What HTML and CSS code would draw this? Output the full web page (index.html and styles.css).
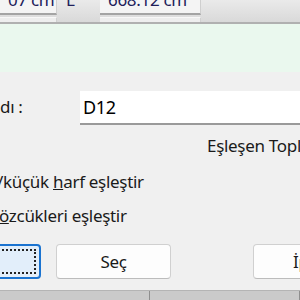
FILE: index.html
```html
<!DOCTYPE html>
<html lang="tr">

<head>
    <meta charset="UTF-8">
    <title>Bul</title>
    <link rel="stylesheet" href="styles.css">
</head>

<body>
    <!-- üst araç çubuğu -->
    <div class="toolbar">
        <div class="tool-row">
            <div class="field field-w"><span class="field-text right">07 cm</span></div>
            <div class="tool-label"><span class="field-text">L</span></div>
            <div class="field field-l"><span class="field-text">668.12 cm</span></div>
        </div>
        <div class="tool-row tool-row2">
            <div class="field2 field-w"></div>
            <div class="tool-gap"></div>
            <div class="field2 field-l"></div>
        </div>
    </div>

    <!-- yeşil bilgi alanı -->
    <div class="info"></div>

    <!-- arama formu -->
    <div class="form">
        <div class="form-row">
            <label class="form-label">dı :</label>
            <div class="textbox">D12</div>
        </div>
        <div class="match">Eşleşen Toplam</div>
        <div class="check">/küçük <u>h</u>arf eşleştir</div>
        <div class="check check2"><u>ö</u>zcükleri eşleştir</div>
        <div class="buttons">
            <button class="btn btn-focus"><span class="focus-rect">Bul</span></button>
            <button class="btn">Seç</button>
            <button class="btn btn-far">İptal</button>
        </div>
    </div>

    <!-- alt durum çubuğu -->
    <div class="status">
        <div class="status-cell"></div>
        <div class="status-cell"></div>
    </div>
</body>

</html>
```

FILE: styles.css
```css
* {
    margin: 0;
    padding: 0;
    box-sizing: border-box;
}

body {
    width: 300px;
    height: 300px;
    overflow: hidden;
    background-color: #f0f0f0;
    font-family: "Noto Sans", "Open Sans", sans-serif;
    font-size: 17px;
    letter-spacing: -0.3px;
    color: #1a1a1a;
}

/* araç çubuğu */
.toolbar {
    height: 24px;
    background: linear-gradient(#eaeaea, #d9d9d9);
    border-bottom: 2px solid #b0b0b0;
}

.tool-row {
    display: flex;
    height: 15px;
}

.field {
    height: 15px;
    overflow: hidden;
    background-color: #f4f4f4;
    border-bottom: 2px solid #a4a4a4;
    border-right: 1px solid #cfcfcf;
}

.field-w {
    width: 57px;
}

.field-l {
    width: 101px;
}

.field-text {
    display: block;
    margin-top: -12px;
    line-height: 24px;
    padding-left: 8px;
    color: #20205a;
    white-space: nowrap;
}

.field-text.right {
    text-align: right;
    padding-right: 4px;
}

.tool-label {
    width: 43px;
    height: 15px;
    overflow: hidden;
}

.tool-label .field-text {
    padding-left: 9px;
}

.tool-row2 {
    height: 7px;
    margin-top: 2px;
}

.field2 {
    height: 5px;
    background-color: #eeeeee;
    border-top: 1px solid #f8f8f8;
    border-right: 1px solid #d0d0d0;
}

.tool-gap {
    width: 43px;
}

/* bilgi alanı */
.info {
    height: 48px;
    background-color: #eaf8ee;
}

/* form */
.form-row {
    display: flex;
    margin-top: 19px;
    height: 34px;
}

.form-label {
    width: 80px;
    flex-shrink: 0;
    line-height: 34px;
    margin-top: -1px;
}

.textbox {
    width: 240px;
    flex-shrink: 0;
    background-color: #ffffff;
    border-bottom: 2px solid #9a9a9a;
    padding-left: 3px;
    line-height: 32px;
    font-size: 18px;
    color: #000000;
}

.match {
    margin-top: 9px;
    padding-left: 207px;
    line-height: 24px;
    white-space: nowrap;
}

.check {
    margin-top: 12px;
    margin-left: -3px;
    line-height: 24px;
    white-space: nowrap;
}

.check2 {
    margin-top: 10px;
    margin-left: -1px;
}

/* düğmeler */
.buttons {
    display: flex;
    gap: 15px;
    margin-top: 16px;
    margin-left: -74px;
}

.btn {
    flex-shrink: 0;
    width: 115px;
    height: 35px;
    border: 1px solid #d0d0d0;
    border-bottom-color: #bcbcbc;
    border-radius: 4px;
    background-color: #fdfdfd;
    font-family: inherit;
    font-size: 17px;
    letter-spacing: -0.3px;
    color: #1a1a1a;
}

.btn-focus {
    border: 2px solid #1a73d0;
    background-color: #e2eefa;
    padding: 3px;
}

.focus-rect {
    display: block;
    height: 100%;
    border: 2px dotted #222222;
    line-height: 21px;
}

.btn-far {
    margin-left: 67px;
}

/* durum çubuğu */
.status {
    display: flex;
    margin-top: 11px;
    height: 10px;
    background-color: #cacaca;
    border-top: 1px solid #b4b4b4;
}

.status-cell {
    width: 200px;
    border-right: 1px solid #8e8e8e;
}
```
